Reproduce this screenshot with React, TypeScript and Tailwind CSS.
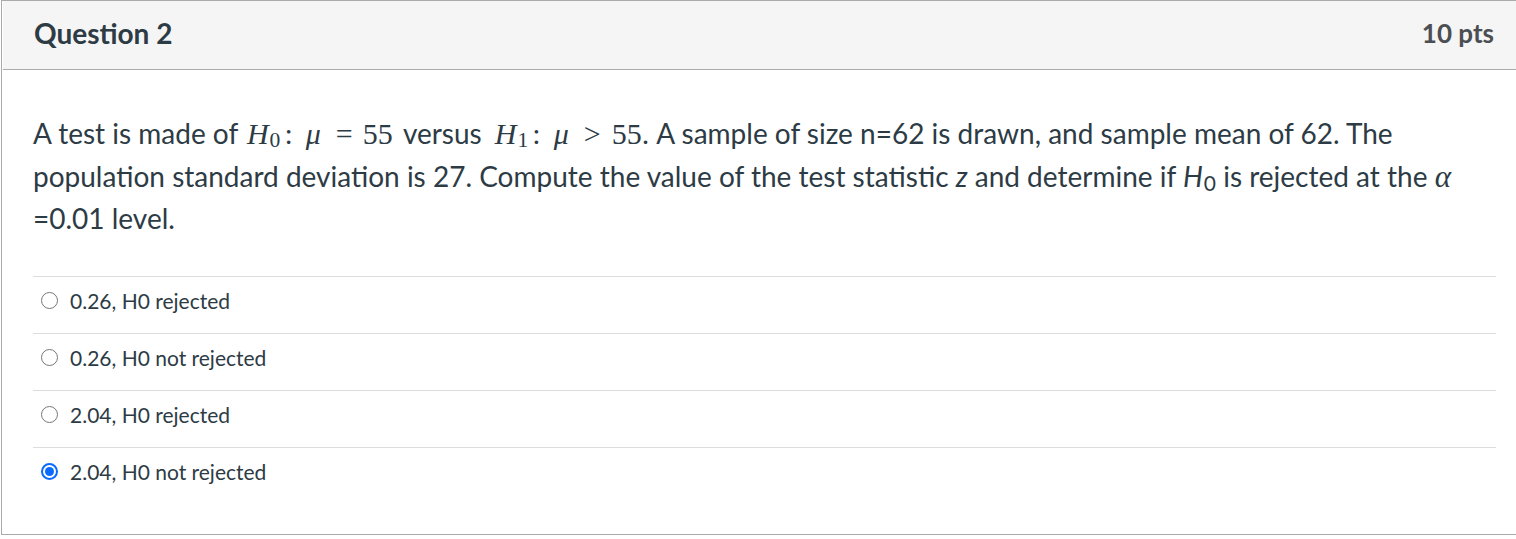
import React from 'react';

const answers = [
  { id: 'a1', label: '0.26, H0 rejected', checked: false },
  { id: 'a2', label: '0.26, H0 not rejected', checked: false },
  { id: 'a3', label: '2.04, H0 rejected', checked: false },
  { id: 'a4', label: '2.04, H0 not rejected', checked: true },
];

const serif = "font-['Liberation_Serif','DejaVu_Serif',serif]";

const MathH = ({ sub }: { sub: string }) => (
  <span className="whitespace-nowrap">
    <i>H</i>
    <sub className="text-[0.72em] leading-none not-italic relative top-[0.15em] align-baseline ml-[1px]">{sub}</sub>
  </span>
);

const Radio = ({ checked }: { checked: boolean }) => (
  <span
    className={`inline-flex items-center justify-center w-[17px] h-[17px] rounded-full shrink-0 ${
      checked ? 'border-[2px] border-[#0a6cff]' : 'border-[1.5px] border-[#767676]'
    }`}
  >
    {checked && <span className="w-[9px] h-[9px] rounded-full bg-[#0a6cff]" />}
  </span>
);

export default function App() {
  return (
    <div className="w-[1530px] bg-white font-['Lato','Noto_Sans',sans-serif] text-[#2d3b45]">
      <div className="ml-[1px] border-l border-t border-b border-[#aaaaaa] h-[535px] box-border">
        {/* header */}
        <div className="h-[69px] bg-[#f5f5f5] border-b border-[#aaaaaa] flex items-center pl-[31px] pr-[23px] w-[1514px] ml-[1px]">
          <h2 className="text-[28px] font-bold text-[#2d3b45] pb-[4px]">Question 2</h2>
          <span className="ml-auto text-[26px] font-bold text-[#4b4f53] pb-[4px]">10 pts</span>
        </div>

        {/* body */}
        <div className="pl-[31px] w-[1495px]">
          <p className="pt-[42px] text-[28px] leading-[42.5px]">
            A test is made of{' '}
            <span className={`${serif} text-[30px] leading-none whitespace-nowrap ml-[2px] mr-[3px]`}>
              <MathH sub="0" />
              <span className="ml-[4px]">:</span>
              <span className="ml-[13px]"><i>μ</i></span>
              <span className="ml-[15px] mr-[10px]">=</span>55
            </span>{' '}
            versus{' '}
            <span className={`${serif} text-[30px] leading-none whitespace-nowrap ml-[6px]`}>
              <MathH sub="1" />
              <span className="ml-[4px]">:</span>
              <span className="ml-[13px]"><i>μ</i></span>
              <span className="ml-[15px] mr-[11px]">&gt;</span>55.
            </span>{' '}
            A sample of size n=62 is drawn, and sample mean of 62. The population standard deviation is 27. Compute
            the value of the test statistic <i>z</i> and determine if{' '}
            <i>H</i>
            <sub className="text-[0.75em] leading-none not-italic relative top-[0.2em] align-baseline ml-[1px]">0</sub> is rejected at the{' '}
            <i className={`${serif} text-[31px] leading-none`}>α</i>
            <br />
            =0.01 level.
          </p>

          <div className="mt-[36px] w-[1463px]">
            {answers.map((a) => (
              <div key={a.id} className="border-t border-[#dddddd] h-[57px] flex items-center pl-[8px] gap-[12px] pb-[8px]">
                <Radio checked={a.checked} />
                <span className="text-[21px]">{a.label}</span>
              </div>
            ))}
          </div>
        </div>
      </div>
    </div>
  );
}
